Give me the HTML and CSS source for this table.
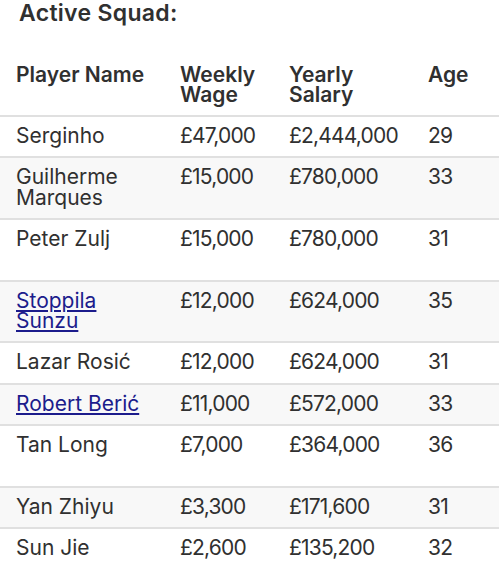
FILE: index.html
```html
<!DOCTYPE html>
<html lang="en">
<head>
<meta charset="utf-8">
<title>Active Squad</title>
<link rel="stylesheet" href="styles.css">
</head>
<body>
<h2 class="title">Active Squad:</h2>
<div class="squad">
  <div class="row head">
    <div>Player Name</div>
    <div>Weekly<br>Wage</div>
    <div>Yearly<br>Salary</div>
    <div>Age</div>
  </div>
  <div class="row">
    <div>Serginho</div><div class="num">£47,000</div><div class="num">£2,444,000</div><div class="num">29</div>
  </div>
  <div class="row alt">
    <div>Guilherme<br>Marques</div><div class="num">£15,000</div><div class="num">£780,000</div><div class="num">33</div>
  </div>
  <div class="row tall">
    <div>Peter Zulj</div><div class="num">£15,000</div><div class="num">£780,000</div><div class="num">31</div>
  </div>
  <div class="row alt">
    <div><a class="link" href="#">Stoppila<br>Sunzu</a></div><div class="num">£12,000</div><div class="num">£624,000</div><div class="num">35</div>
  </div>
  <div class="row">
    <div>Lazar Rosić</div><div class="num">£12,000</div><div class="num">£624,000</div><div class="num">31</div>
  </div>
  <div class="row alt">
    <div><a class="link" href="#">Robert Berić</a></div><div class="num">£11,000</div><div class="num">£572,000</div><div class="num">33</div>
  </div>
  <div class="row tall">
    <div>Tan Long</div><div class="num">£7,000</div><div class="num">£364,000</div><div class="num">36</div>
  </div>
  <div class="row alt">
    <div>Yan Zhiyu</div><div class="num">£3,300</div><div class="num">£171,600</div><div class="num">31</div>
  </div>
  <div class="row">
    <div>Sun Jie</div><div class="num">£2,600</div><div class="num">£135,200</div><div class="num">32</div>
  </div>
</div>
</body>
</html>
```
FILE: styles.css
```css
body {
  margin: 0;
  background: #fff;
  color: #303030;
  font-family: Inter, "Open Sans", sans-serif;
}
.title {
  margin: 0 0 29.5px 19px;
  font-size: 23px;
  font-weight: 600;
  line-height: 26px;
  letter-spacing: 0.3px;
  color: #303030;
}
.squad {
  width: 499px;
}
.row {
  display: grid;
  grid-template-columns: 164px 109px 139px 1fr;
  padding: 9px 0 10px 16px;
  font-size: 21px;
  line-height: 20.33px;
  border-top: 2px solid #e0e0e0;
  box-sizing: border-box;
}
.row.head {
  border-top: none;
  font-weight: 600;
}
.row.alt {
  background: #f8f8f8;
}
.row.tall {
  min-height: 61.67px;
}
.num {
  letter-spacing: -0.8px;
}
.link {
  color: #1c1c8c;
  text-decoration: underline;
  text-underline-offset: 2px;
}
```
